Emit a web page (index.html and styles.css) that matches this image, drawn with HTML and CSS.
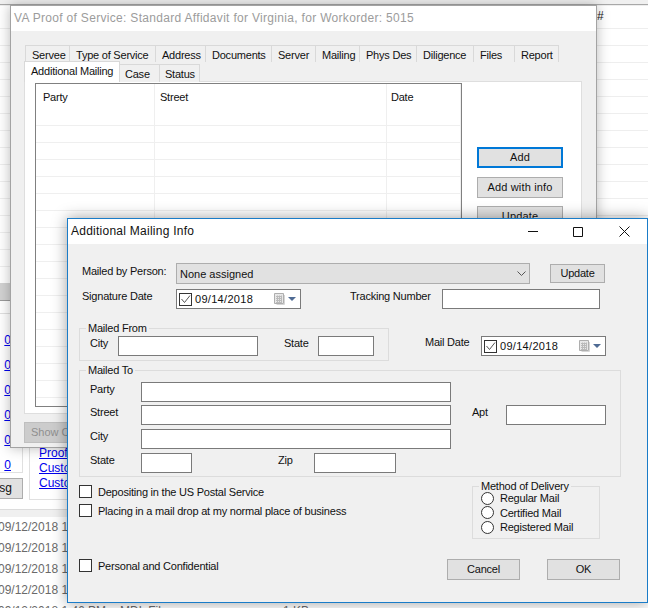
FILE: index.html
```html
<!DOCTYPE html>
<html lang="en">
<head>
<meta charset="utf-8">
<title>Additional Mailing Info</title>
<link rel="stylesheet" href="styles.css">
</head>
<body>
<div class="desktop">
  <div class="app">
    <div class="app-top"><span class="hash">#</span></div>
    <div class="app-grid"></div>
    <div class="app-band"></div>
    <div class="app-mid">
      <div class="col-a">
        <div class="link-box">
          <a class="zero">0</a><a class="zero">0</a><a class="zero">0</a><a class="zero">0</a><a class="zero">0</a><a class="zero">0</a>
        </div>
        <div class="msg-btn">Msg</div>
      </div>
      <div class="proof-box">
        <a class="doc-link">Proof of Service</a>
        <a class="doc-link">Customer Invoice</a>
        <a class="doc-link">Customer Letter</a>
      </div>
    </div>
    <div class="app-head"></div>
    <div class="file-row"><span class="f-date">09/12/2018 1:46 PM</span><span class="f-type">MDL File</span><span>1 KB</span></div>
    <div class="file-row"><span class="f-date">09/12/2018 1:46 PM</span><span class="f-type">MDL File</span><span>1 KB</span></div>
    <div class="file-row"><span class="f-date">09/12/2018 1:46 PM</span><span class="f-type">MDL File</span><span>1 KB</span></div>
    <div class="file-row"><span class="f-date">09/12/2018 1:46 PM</span><span class="f-type">MDL File</span><span>1 KB</span></div>
    <div class="file-row"><span class="f-date">09/12/2018 1:46 PM</span><span class="f-type">MDL File</span><span>1 KB</span></div>
  </div>

  <section class="win win-back">
    <header class="back-title">VA Proof of Service: Standard Affidavit for Virginia, for Workorder: 5015</header>
    <div class="tabs tabs-1">
      <span class="tab w45">Servee</span><span class="tab w86">Type of Service</span><span class="tab w50">Address</span><span class="tab w66">Documents</span><span class="tab w44">Server</span><span class="tab w44">Mailing</span><span class="tab w57">Phys Des</span><span class="tab w57">Diligence</span><span class="tab w41">Files</span><span class="tab w44">Report</span>
    </div>
    <div class="tabs tabs-2">
      <span class="tab tab-on">Additional Mailing</span><span class="tab w40 low">Case</span><span class="tab w40 low">Status</span>
    </div>
    <div class="panel">
      <div class="list">
        <div class="list-col c1"><div class="list-h">Party</div></div>
        <div class="list-col c2"><div class="list-h">Street</div></div>
        <div class="list-col c3"><div class="list-h">Date</div></div>
      </div>
      <div class="side-btns">
        <div class="btn btn-side btn-focus">Add</div>
        <div class="btn btn-side">Add with info</div>
        <div class="btn btn-side">Update</div>
      </div>
    </div>
    <div class="btn btn-show">Show Case</div>
  </section>

  <section class="win win-dialog">
    <header class="dlg-title">
      <span class="dlg-name">Additional Mailing Info</span>
      <svg class="caption c-min" width="10" height="1" viewBox="0 0 10 1"><path d="M0 .5h10" stroke="#111" fill="none"/></svg>
      <svg class="caption c-max" width="10" height="10" viewBox="0 0 10 10"><path d="M.5.5h9v9h-9z" stroke="#111" fill="none"/></svg>
      <svg class="caption c-close" width="11" height="11" viewBox="0 0 11 11"><path d="M.5.5l10 10M10.5.5l-10 10" stroke="#111" fill="none"/></svg>
    </header>
    <div class="dlg-body">
      <div class="row row-person">
        <label class="lbl w94 up3">Mailed by Person:</label>
        <div class="select"><span>None assigned</span>
          <svg width="9" height="5" viewBox="0 0 9 5"><path d="M.5.5l4 4 4-4" stroke="#555" fill="none"/></svg>
        </div>
        <div class="btn btn-update">Update</div>
      </div>
      <div class="row row-sign">
        <label class="lbl w94 up3">Signature Date</label>
        <div class="date">
          <span class="check on"><svg width="11" height="11" viewBox="0 0 11 11"><path d="M1.500 5l3 3.500L10 1.500" stroke="#555" fill="none"/></svg></span>
          <span class="date-val">09/14/2018</span>
          <svg class="cal" width="12" height="12" viewBox="0 0 12 12"><path d="M.5.5h9v10h-9z" fill="#e8e8e8" stroke="#aeaeae"/><path d="M2 3.500h6M2 5.500h6M2 7.500h6M2 9.500h6M3.500 2.500v7M5.500 2.500v7M7.500 2.500v7" stroke="#bababa" fill="none"/><path d="M10.500 2v9.500h-8" stroke="#d6d6d6" fill="none"/></svg>
          <svg class="arrow" width="8" height="4" viewBox="0 0 8 4"><path d="M0 0h8L4 4z" fill="#4f6b94"/></svg>
        </div>
        <label class="lbl lbl-track up3">Tracking Number</label>
        <input class="field w158" type="text">
      </div>
      <div class="row row-from">
        <fieldset class="group group-from">
          <legend>Mailed From</legend>
          <div class="group-row">
            <label class="lbl w28 up3">City</label>
            <input class="field w140" type="text">
            <label class="lbl lbl-state up3">State</label>
            <input class="field w56" type="text">
          </div>
        </fieldset>
        <div class="mail-date">
          <label class="lbl w56 up4">Mail Date</label>
          <div class="date">
            <span class="check on"><svg width="11" height="11" viewBox="0 0 11 11"><path d="M1.500 5l3 3.500L10 1.500" stroke="#555" fill="none"/></svg></span>
            <span class="date-val">09/14/2018</span>
            <svg class="cal" width="12" height="12" viewBox="0 0 12 12"><path d="M.5.5h9v10h-9z" fill="#e8e8e8" stroke="#aeaeae"/><path d="M2 3.500h6M2 5.500h6M2 7.500h6M2 9.500h6M3.500 2.500v7M5.500 2.500v7M7.500 2.500v7" stroke="#bababa" fill="none"/><path d="M10.500 2v9.500h-8" stroke="#d6d6d6" fill="none"/></svg>
            <svg class="arrow" width="8" height="4" viewBox="0 0 8 4"><path d="M0 0h8L4 4z" fill="#4f6b94"/></svg>
          </div>
        </div>
      </div>
      <fieldset class="group group-to">
        <legend>Mailed To</legend>
        <div class="group-row">
          <label class="lbl w51 up3">Party</label>
          <input class="field w310" type="text">
        </div>
        <div class="group-row gap3">
          <label class="lbl w51 up3">Street</label>
          <input class="field w310" type="text">
          <label class="lbl lbl-apt up3">Apt</label>
          <input class="field w100" type="text">
        </div>
        <div class="group-row gap4">
          <label class="lbl w51 up3">City</label>
          <input class="field w310" type="text">
        </div>
        <div class="group-row gap4">
          <label class="lbl w51 up3">State</label>
          <input class="field w51f" type="text">
          <label class="lbl lbl-zip up3">Zip</label>
          <input class="field w82" type="text">
        </div>
      </fieldset>
      <div class="row-bottom">
        <div class="checks">
          <div class="check-row"><span class="check"></span><label class="lbl">Depositing in the US Postal Service</label></div>
          <div class="check-row gap6"><span class="check"></span><label class="lbl">Placing in a mail drop at my normal place of business</label></div>
          <div class="check-row gap42"><span class="check"></span><label class="lbl">Personal and Confidential</label></div>
        </div>
        <div class="right-col">
          <fieldset class="group group-method">
            <legend>Method of Delivery</legend>
            <div class="radio-row"><span class="radio"></span><label class="lbl">Regular Mail</label></div>
            <div class="radio-row"><span class="radio"></span><label class="lbl">Certified Mail</label></div>
            <div class="radio-row"><span class="radio"></span><label class="lbl">Registered Mail</label></div>
          </fieldset>
          <div class="dlg-actions">
            <div class="btn btn-action">Cancel</div>
            <div class="btn btn-action">OK</div>
          </div>
        </div>
      </div>
    </div>
  </section>
</div>
</body>
</html>
```
FILE: styles.css
```css
* { box-sizing: border-box; }
html, body { margin: 0; padding: 0; }
body { background: #fff; font: 11px/14px "Liberation Sans", Arial, sans-serif; letter-spacing: -.22px; color: #111; }
.desktop { position: relative; width: 648px; height: 608px; overflow: hidden; background: #fff; }

/* background application */
.app { width: 648px; height: 608px; overflow: hidden; display: flex; flex-direction: column; }
.app-top { height: 5px; flex: none; background: #f0f0f0; border-bottom: 1px solid #a8a8a8; border-top: 3px solid #f0f0f0; position: relative; }
.hash { position: absolute; left: 597px; top: 6px; font-size: 12px; color: #222; }
.app-grid { height: 278px; flex: none; background: repeating-linear-gradient(to bottom, #fff 0, #fff 16px, #eeeeee 16px, #eeeeee 17px); background-position: 0 7px; }
.app-band { height: 18px; flex: none; background: #d2d2d2; border-bottom: 1px solid #9a9a9a; }
.app-mid { height: 209px; flex: none; display: flex; border-bottom: 1px solid #dcdcdc; }
.col-a { width: 23px; flex: none; display: flex; flex-direction: column; }
.link-box { height: 160px; margin-top: 12px; border: 1px solid #e0e0e0; border-left: 0; display: flex; flex-direction: column; align-items: flex-end; padding: 19px 11px 0 0; gap: 11px; flex: none; }
.zero { color: #0000ee; text-decoration: underline; font-size: 12px; line-height: 14px; letter-spacing: 0; }
.msg-btn { width: 45px; height: 21px; margin: 5px 0 0 -22px; background: #e1e1e1; border: 1px solid #adadad; font-size: 12px; line-height: 19px; letter-spacing: 0; text-align: center; flex: none; }
.proof-box { width: 120px; height: 100px; margin: 99px 0 0 6px; padding: 45px 0 0 9px; border: 1px solid #e0e0e0; overflow: hidden; flex: none; }
.doc-link { display: block; color: #0000ee; text-decoration: underline; font-size: 12px; line-height: 15px; letter-spacing: 0; white-space: nowrap; }
.app-head { height: 7px; flex: none; background: #f0f0f0; }
.file-row { height: 21px; flex: none; display: flex; font-size: 12px; line-height: 21px; letter-spacing: 0; color: #6a6a6a; margin-left: -2px; white-space: nowrap; }
.f-date { width: 122px; }
.f-type { width: 163px; }

/* windows */
.win { position: absolute; }
.win-back { left: 10px; top: 5px; width: 587px; height: 443px; background: #f0f0f0; border: 1px solid #a3a3a3; box-shadow: 0 0 12px rgba(0,0,0,.28); }
.back-title { height: 25px; background: #fff; color: #9c9c9c; font-size: 12px; line-height: 25px; padding-left: 3px; letter-spacing: .31px; white-space: nowrap; }
.tabs { display: flex; }
.tabs-1 { margin: 14px 0 0 14px; height: 17px; }
.tabs-2 { margin: -1px 0 0 13px; height: 21px; align-items: flex-end; position: relative; z-index: 1; }
.tab { height: 17px; padding-left: 6px; background: #f0f0f0; border: 1px solid #d9d9d9; border-bottom: 0; border-left-width: 0; white-space: nowrap; line-height: 19px; }
.tabs-1 .tab:first-child { border-left-width: 1px; }
.tab.low { height: 18px; line-height: 18px; border-bottom: 0; padding-left: 5px; }
.tab-on { width: 96px; height: 21px; background: #fff; border-left-width: 1px; padding-left: 6px; line-height: 18px; }
.w45 { width: 45px; } .w86 { width: 86px; } .w50 { width: 50px; } .w66 { width: 66px; } .w44 { width: 44px; }
.w57 { width: 57px; } .w41 { width: 41px; } .w40 { width: 40px; }
.panel { margin: -1px 0 0 13px; width: 558px; height: 333px; background: #fff; border: 1px solid #dedede; display: flex; align-items: flex-start; }
.list { width: 427px; height: 324px; margin: 1px 0 0 10px; border: 1px solid #808080; display: flex; flex: none; }
.list-col { border-right: 1px solid #efefef; background: repeating-linear-gradient(to bottom, #fff 0, #fff 16px, #efefef 16px, #efefef 17px); background-position: 0 8px; }
.c1 { width: 119px; } .c2 { width: 232px; } .c3 { width: 74px; }
.list-h { height: 25px; padding: 6px 0 0 7px; background: #fff; }
.c2 .list-h { padding-left: 5px; }
.c3 .list-h { padding-left: 4px; }
.side-btns { margin: 65px 0 0 15px; display: flex; flex-direction: column; gap: 8px; }
.btn { background: #e1e1e1; border: 1px solid #adadad; text-align: center; flex: none; }
.btn-side { width: 86px; height: 21px; line-height: 19px; letter-spacing: .15px; }
.btn-focus { border: 2px solid #0078d7; line-height: 17px; margin-bottom: 1px; }
.btn-show { width: 70px; height: 21px; margin: 8px 0 0 13px; background: #ccc; border-color: #bfbfbf; color: #8f8f8f; line-height: 19px; text-align: left; padding-left: 6px; letter-spacing: 0; }

/* dialog */
.win-dialog { left: 67px; top: 218px; width: 581px; height: 385px; background: #f0f0f0; border: 1px solid #1a7cc8; box-shadow: 0 0 14px rgba(0,0,0,.38); }
.dlg-title { height: 25px; background: #fff; display: flex; align-items: center; padding-left: 3px; }
.dlg-name { font-size: 12px; letter-spacing: .25px; flex: 1; margin-top: -2px; }
.caption { flex: none; display: block; }
.c-min { margin-right: 35px; }
.c-max { margin-right: 36px; }
.c-close { margin-right: 17px; }
.dlg-body { display: flex; flex-direction: column; }
.row { display: flex; align-items: center; padding-left: 14px; flex: none; }
.row-person { margin-top: 19px; height: 21px; }
.row-sign { margin-top: 5px; height: 20px; }
.row-from { margin-top: 12px; padding-left: 11px; align-items: flex-start; height: 40px; }
.lbl { display: block; flex: none; white-space: nowrap; }
.up3 { margin-top: -6px; }
.up4 { margin-top: -8px; }
.w94 { width: 94px; } .w28 { width: 28px; } .w56 { width: 56px; } .w51 { width: 51px; }
.select { width: 354px; height: 21px; background: #e1e1e1; border: 1px solid #adadad; display: flex; align-items: center; justify-content: space-between; padding: 0 3px 0 3px; flex: none; letter-spacing: 0; }
.btn-update { width: 55px; height: 19px; margin-left: 20px; line-height: 17px; }
.date { width: 125px; height: 20px; background: #fff; border: 1px solid #7a7a7a; display: flex; align-items: center; padding-left: 2px; flex: none; }
.check { width: 13px; height: 13px; border: 1px solid #333; background: #fff; display: block; flex: none; }
.check svg { display: block; }
.date-val { margin-left: 3px; width: 79px; flex: none; letter-spacing: .3px; }
.date .cal { flex: none; margin-right: 2px; }
.date .arrow { flex: none; }
.lbl-track { margin-left: 49px; width: 92px; }
.field { height: 20px; background: #fff; border: 1px solid #7a7a7a; border-radius: 0; margin: 0; padding: 0; outline: 0; flex: none; display: block; }
.w158 { width: 158px; } .w140 { width: 140px; } .w310 { width: 310px; } .w100 { width: 100px; } .w82 { width: 82px; } .w51f { width: 51px; }
.group { margin: 0; border: 1px solid #dcdcdc; min-width: 0; }
.group legend { padding: 0 2px; margin-left: -4px; line-height: 14px; }
.group-row { display: flex; align-items: center; height: 20px; }
.group-from { width: 310px; height: 40px; padding: 1px 0 0 10px; flex: none; }
.lbl-state { margin-left: 26px; width: 34px; }
.mail-date { margin: 15px 0 0 36px; display: flex; align-items: center; }
.group-to { width: 542px; height: 114px; margin: 2px 0 0 11px; padding: 5px 0 0 10px; flex: none; }
.gap3 { margin-top: 3px; } .gap4 { margin-top: 4px; }
.lbl-apt { margin-left: 21px; width: 34px; }
.lbl-zip { margin-left: 86px; width: 36px; }
.row-bottom { display: flex; flex: none; }
.checks { width: 379px; padding: 8px 0 0 11px; flex: none; }
.check-row { display: flex; align-items: center; height: 13px; }
.check-row .lbl { margin-left: 6px; }
.gap6 { margin-top: 6px; }
.gap42 { margin-top: 42px; }
.right-col { width: 173px; flex: none; }
.group-method { width: 128px; height: 60px; margin: 2px 0 0 25px; padding: 0 0 0 8px; }
.group-method legend { margin-left: -2px; }
.radio-row { display: flex; align-items: center; height: 14.5px; }
.radio-row:first-of-type { margin-top: -2px; }
.radio-row .lbl { margin-left: 6px; }
.radio { width: 13px; height: 13px; border: 1px solid #333; border-radius: 50%; background: #fff; display: block; flex: none; }
.dlg-actions { display: flex; justify-content: space-between; margin-top: 20px; }
.btn-action { width: 73px; height: 21px; line-height: 19px; }
```
